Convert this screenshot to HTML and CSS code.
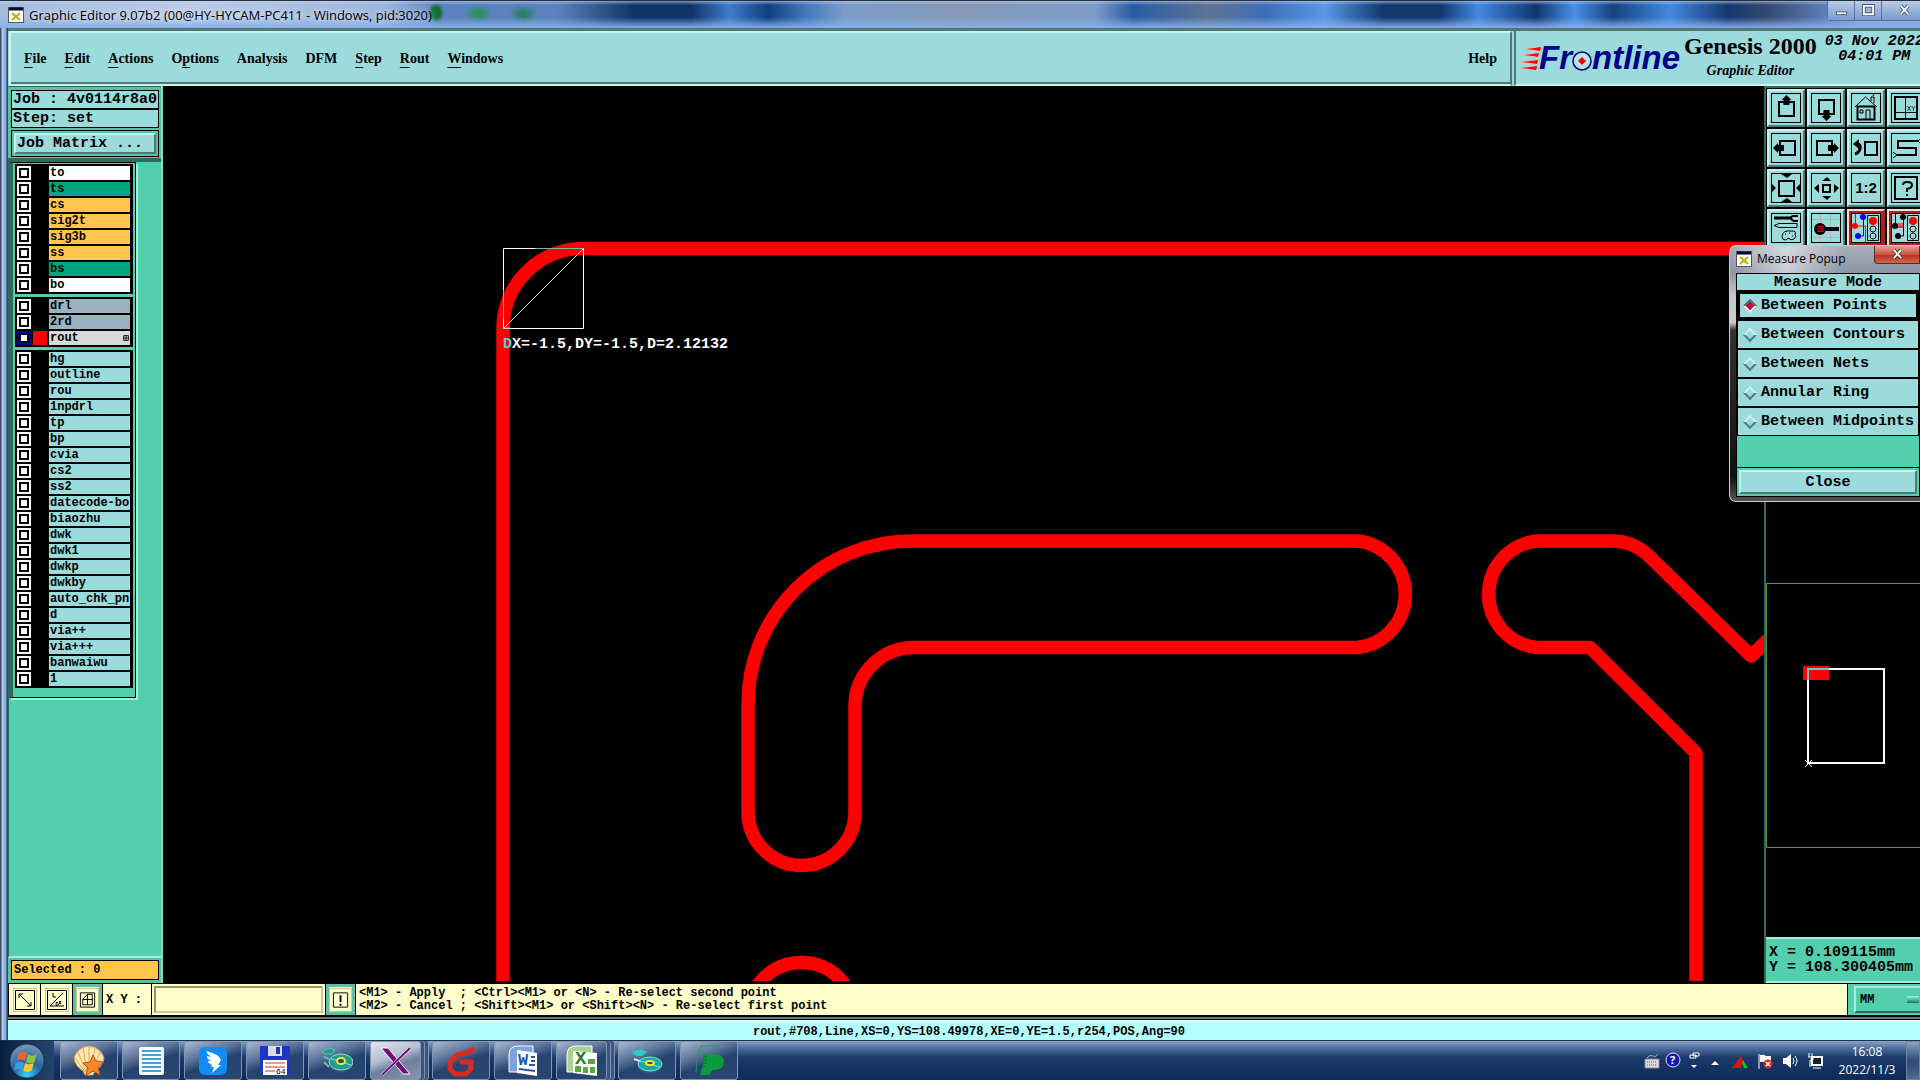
FILE: index.html
```html
<!DOCTYPE html>
<html lang="en">
<head>
    <meta charset="UTF-8">
    <meta name="viewport" content="width=device-width, initial-scale=1.0">
    <title>Graphic Editor</title>
    <link rel="stylesheet" href="styles.css">
</head>
<body>
    <main class="window">
        <header class="titlebar">
            <svg class="app-icon" viewBox="0 0 16 16"><rect x="0.5" y="0.5" width="15" height="15" fill="#fff" stroke="#555"/><path d="M1 2h14" stroke="#003" stroke-width="3"/><path d="M4 6l8 7M12 6l-8 7" stroke="#b5b300" stroke-width="2"/></svg>
            <h1>Graphic Editor 9.07b2 (00@HY-HYCAM-PC411 - Windows, pid:3020)</h1>
            <div class="controls">
                <button aria-label="Minimize"><svg viewBox="0 0 14 14"><rect x="1.5" y="8.5" width="11" height="3" fill="#fff" stroke="#4b5975"/></svg></button>
                <button aria-label="Maximize"><svg viewBox="0 0 14 14"><path d="M2 2h10v9H2z" fill="none" stroke="#4b5975" stroke-width="4"/><path d="M2 2h10v9H2z" fill="none" stroke="#fff" stroke-width="2"/></svg></button>
                <button class="wide" aria-label="Close"><svg viewBox="0 0 14 14"><path d="M3 2l8 9M11 2l-8 9" stroke="#4b5975" stroke-width="4"/><path d="M3 2l8 9M11 2l-8 9" stroke="#fff" stroke-width="2"/></svg></button>
            </div>
        </header>

        <div class="top">
            <nav class="menubar">
                <button><u>F</u>ile</button>
                <button><u>E</u>dit</button>
                <button><u>A</u>ctions</button>
                <button>O<u>p</u>tions</button>
                <button>Analysis</button>
                <button>DFM</button>
                <button><u>S</u>tep</button>
                <button><u>R</u>out</button>
                <button><u>W</u>indows</button>
                <button class="help">Help</button>
            </nav>
            <div class="brand">
                <div class="logo">
                    <svg class="speed" viewBox="0 0 24 24">
                        <path d="M4 3L18 1h6l-1 4h-5zM2 9L16 7h6l-1 4h-5zM0 16L14 14h7l-1 4h-6zM0 22L13 20h7l-1 4h-6z" fill="#f5b5ae"/>
                        <path d="M8 3l9-1 6-1-1 4-5-1zM6 9l9-1 6-1-1 4-5-1zM4 16l9-1 7-1-1 4-6-1zM3 22l9-1 7-1-1 4-6-1z" fill="#f00"/>
                    </svg>
                    <span>Fr</span>
                    <svg class="target" viewBox="0 0 20 20"><circle cx="10" cy="10" r="9" fill="#b8e4e4" stroke="#00008b" stroke-width="1.5"/><path d="M10 6l4 4-4 4-4-4z" fill="#f00"/></svg>
                    <span>ntline</span>
                </div>
                <div class="product">
                    <strong>Genesis 2000</strong>
                    <em>Graphic Editor</em>
                </div>
                <div class="date">03 Nov 2022<br>04:01 PM</div>
            </div>
        </div>

        <div class="work">
            <aside class="side">
                <div class="job">
                    <div class="info">Job : 4v0114r8a0</div>
                    <div class="info">Step: set</div>
                    <div class="matrix"><button>Job Matrix ...</button></div>
                </div>
                <div class="layers">
                    <div class="layer-list">
                        <div class="group">
                            <label class="layer white"><input type="checkbox"><i></i><span>to</span></label>
                            <label class="layer green"><input type="checkbox"><i></i><span>ts</span></label>
                            <label class="layer orange"><input type="checkbox"><i></i><span>cs</span></label>
                            <label class="layer orange"><input type="checkbox"><i></i><span>sig2t</span></label>
                            <label class="layer orange"><input type="checkbox"><i></i><span>sig3b</span></label>
                            <label class="layer orange"><input type="checkbox"><i></i><span>ss</span></label>
                            <label class="layer green"><input type="checkbox"><i></i><span>bs</span></label>
                            <label class="layer white"><input type="checkbox"><i></i><span>bo</span></label>
                        </div>
                        <div class="group">
                            <label class="layer gray"><input type="checkbox"><i></i><span>drl</span></label>
                            <label class="layer gray"><input type="checkbox"><i></i><span>2rd</span></label>
                            <label class="layer active"><input type="checkbox" checked><i></i><span>rout<svg viewBox="0 0 5 5"><path d="M0.5 0.5h4v4h-4zM2.5 0v5M0 2.5h5" fill="none" stroke="#000" stroke-width="0.7"/></svg></span></label>
                        </div>
                        <div class="group">
                            <label class="layer"><input type="checkbox"><i></i><span>hg</span></label>
                            <label class="layer"><input type="checkbox"><i></i><span>outline</span></label>
                            <label class="layer"><input type="checkbox"><i></i><span>rou</span></label>
                            <label class="layer"><input type="checkbox"><i></i><span>1npdrl</span></label>
                            <label class="layer"><input type="checkbox"><i></i><span>tp</span></label>
                            <label class="layer"><input type="checkbox"><i></i><span>bp</span></label>
                            <label class="layer"><input type="checkbox"><i></i><span>cvia</span></label>
                            <label class="layer"><input type="checkbox"><i></i><span>cs2</span></label>
                            <label class="layer"><input type="checkbox"><i></i><span>ss2</span></label>
                            <label class="layer"><input type="checkbox"><i></i><span>datecode-bo</span></label>
                            <label class="layer"><input type="checkbox"><i></i><span>biaozhu</span></label>
                            <label class="layer"><input type="checkbox"><i></i><span>dwk</span></label>
                            <label class="layer"><input type="checkbox"><i></i><span>dwk1</span></label>
                            <label class="layer"><input type="checkbox"><i></i><span>dwkp</span></label>
                            <label class="layer"><input type="checkbox"><i></i><span>dwkby</span></label>
                            <label class="layer"><input type="checkbox"><i></i><span>auto_chk_pnl</span></label>
                            <label class="layer"><input type="checkbox"><i></i><span>d</span></label>
                            <label class="layer"><input type="checkbox"><i></i><span>via++</span></label>
                            <label class="layer"><input type="checkbox"><i></i><span>via+++</span></label>
                            <label class="layer"><input type="checkbox"><i></i><span>banwaiwu</span></label>
                            <label class="layer"><input type="checkbox"><i></i><span>1</span></label>
                        </div>
                    </div>
                </div>
                <div class="selected"><div>Selected : 0</div></div>
            </aside>

            <section class="canvas">
                <svg viewBox="163 86 1601 900" preserveAspectRatio="xMinYMin slice">
                    <g fill="none" stroke="#f00" stroke-width="13.5" stroke-linejoin="round">
                        <path d="M503 981V328A80 80 0 0 1 583 248.5H1764"/>
                        <path d="M912 541H1357A53.5 53.5 0 0 1 1357 647.5H914A59 59 0 0 0 855 706V812A53.5 53.5 0 0 1 748 812V704A164 163 0 0 1 912 541Z"/>
                        <path d="M1774 634L1751 656L1650 557Q1634 541 1612 541H1537A53.5 53.5 0 0 0 1537 647.5H1590L1696 753V981"/>
                        <path d="M748 1016A53.5 53.5 0 0 1 855 1016"/>
                    </g>
                    <rect x="163" y="981" width="1601" height="10" fill="#000"/>
                    <path d="M503.5 248.5h80v80h-80z" fill="none" stroke="#fff"/>
                    <path d="M503.5 328.5l80-80" stroke="#dfe6c8"/>
                    <path d="M503.5 319V290M535 248.5h48M503.5 328h7" stroke="#7fb5ae"/>
                    <text class="measure" x="503" y="348"><tspan fill="#5cc">D</tspan>X=-1.5,DY=-1.5,D=2.12132</text>
                </svg>
            </section>

            <aside class="right">
                <div class="tools">
                    <button aria-label="Pan up"><svg viewBox="0 0 30 30"><path d="M8 9h15v14H8z" class="k2"/><path d="M15.5 2l5 5h-2v5h-6V7h-2z"/></svg></button>
                    <button aria-label="Pan down"><svg viewBox="0 0 30 30"><path d="M8 7h15v14H8z" class="k2"/><path d="M15.5 28l5-5h-2v-6h-6v6h-2z"/></svg></button>
                    <button aria-label="Home"><svg viewBox="0 0 30 30"><path d="M6.5 13.5h17v13h-17z" class="k2"/><path d="M4 14L14.5 4L26 14M9 17h3v3H9zM15 26v-9h4v9M20 8V4h3v6M22 3l1-2" class="k1"/></svg></button>
                    <button aria-label="Coordinates"><svg viewBox="0 0 30 30"><path d="M4 4h22v22H4z" class="k2"/><path d="M14.5 4v22M4 19.5h22" class="k1"/><text x="16" y="18" font-size="7">XY</text></svg></button>
                    <button aria-label="Pan left"><svg viewBox="0 0 30 30"><path d="M9 8h15v14H9z" class="k2"/><path d="M2 15l5-5v2h6v6H7v2z"/></svg></button>
                    <button aria-label="Pan right"><svg viewBox="0 0 30 30"><path d="M6 8h15v14H6z" class="k2"/><path d="M28 15l-5-5v2h-6v6h6v2z"/></svg></button>
                    <button aria-label="Previous view"><svg viewBox="0 0 30 30"><path d="M14 9h12v13H14z" class="k2"/><path d="M5 11h2q3 1 2 5q-1 4-5 5" fill="none" stroke="#000" stroke-width="3"/><path d="M2 11l6-5v10z"/></svg></button>
                    <button aria-label="Serpentine"><svg viewBox="0 0 30 30"><path d="M27 8H7v7h18v7H6" class="k2"/><path d="M2 19l4 3l-4 3M30 5l-3 3l3 3" class="k1"/></svg></button>
                    <button aria-label="Zoom in"><svg viewBox="0 0 30 30"><path d="M8 8h15v15H8z" class="k2"/><path d="M10 1h11l-5 4zM10 29h11l-5-4zM0 10v10l5-5zM30 10v10l-5-5z"/></svg></button>
                    <button aria-label="Zoom out"><svg viewBox="0 0 30 30"><path d="M12 12h7v7h-7z" class="k2"/><path d="M11 8h9l-4-4zM11 23h9l-4 4zM8 11v9l-5-5zM23 11v9l5-5z"/></svg></button>
                    <button aria-label="Scale 1:2"><span>1:2</span></button>
                    <button aria-label="Query"><svg viewBox="0 0 30 30"><path d="M4 4h22v22H4z" class="k2"/><path d="M12 12q0-3 4-3q5 0 5 3q0 3-5 4v3M16 21v2" class="k2"/></svg></button>
                    <button aria-label="Setup"><svg viewBox="0 0 30 30"><path d="M3 5h17" stroke="#000" stroke-width="3"/><path d="M27 3h-4q-3 0-3 2t3 3h4" class="k2"/><path d="M3 12.5l5-2h18v4H8z M20 18q-8-1-9 5q0 4 3 4q2 0 3-2q3 3 6 1q3-2 1-5q2-3-4-3zM14 21h1M18 20h1M21 23h1" class="k1"/></svg></button>
                    <button aria-label="Probe"><svg viewBox="0 0 30 30"><path d="M9.5 0v30M19.5 0v30M0 6.5h30M0 24.5h30" stroke="#b9b0b5"/><circle cx="9" cy="16" r="6"/><path d="M9 14h19v4H9z"/><path d="M7 13.5h5v5H7zM9 15.5h1v1H9z" fill="none" stroke="#f00"/></svg></button>
                    <button class="red" aria-label="Netlist compare"><svg viewBox="0 0 30 30"><path d="M4.5 0v13h10v17" fill="none" stroke="#f00"/><path d="M12.5 4v19H6" fill="none" stroke="#00f"/><circle cx="4" cy="13" r="3" fill="#f00"/><circle cx="12" cy="4" r="3" fill="#00f"/><circle cx="7" cy="23" r="3" fill="#00f"/><path d="M16.5 2.5h11v25h-11z" class="k1"/><circle cx="22" cy="8" r="4" fill="#f00"/><circle cx="22" cy="16" r="3" class="k1"/><circle cx="22" cy="23" r="3" class="k1"/></svg></button>
                    <button class="red" aria-label="Netlist check"><svg viewBox="0 0 30 30"><path d="M4.5 0v13M12.5 4v19H6" class="k1"/><path d="M7 15V10M9 15V10M11 15V10M7 14h5" stroke="#f00"/><circle cx="4" cy="13" r="3"/><circle cx="12" cy="4" r="3"/><circle cx="7" cy="23" r="3"/><path d="M16.5 2.5h11v25h-11z" class="k1"/><circle cx="22" cy="8" r="4" fill="#f00"/><circle cx="22" cy="16" r="3" class="k1"/><circle cx="22" cy="23" r="3" class="k1"/></svg></button>
                </div>
                <div class="navigator">
                    <svg viewBox="1766 583 154 266">
                        <path d="M1930 583.5H1766.5v264H1930" fill="none" stroke="#5b9130"/>
                        <rect x="1803" y="666" width="26" height="14" fill="#f00"/>
                        <rect x="1808" y="669" width="76" height="94" fill="none" stroke="#fff" stroke-width="2"/>
                        <path d="M1808 680v-11h21" fill="none" stroke="#6dc4c0" stroke-width="2"/>
                        <path d="M1805 760l7 7M1812 760l-7 7" stroke="#fff"/>
                    </svg>
                </div>
                <div class="coords">X = 0.109115mm<br>Y = 108.300405mm</div>
            </aside>
        </div>

        <div class="inputbar">
            <button class="snap" aria-label="Snap off"><svg viewBox="0 0 20 20"><path d="M0.5 0.5h19v19H0.5zM4 4l12 12M4 8V4h4M16 12v4h-4" class="k1"/></svg></button>
            <button class="snap" aria-label="Angle"><svg viewBox="0 0 20 20"><path d="M0.5 0.5h19v19H0.5zM17 16H3L16 3M6 3v4h3M11 13q-2-2-2 1t3 0l2-3M14 14l-2-3" class="k1"/></svg></button>
            <button class="snap on" aria-label="Grid"><svg viewBox="0 0 20 20"><path d="M2.5 2.5h15v15h-15zM5 15V9l5-5h5v11zM10 4v11M5 9.5h10" class="k1"/></svg></button>
            <label for="xy">X Y :</label>
            <div class="field"><input type="text" id="xy"></div>
            <button class="snap on" aria-label="Apply"><svg viewBox="0 0 20 20"><path d="M2.5 2.5h15v15h-15z" class="k1"/><path d="M10 5v7M10 14v2" class="k2"/></svg></button>
            <pre class="prompt">&lt;M1&gt; - Apply  ; &lt;Ctrl&gt;&lt;M1&gt; or &lt;N&gt; - Re-select second point
&lt;M2&gt; - Cancel ; &lt;Shift&gt;&lt;M1&gt; or &lt;Shift&gt;&lt;N&gt; - Re-select first point</pre>
            <div class="units"><select aria-label="Units"><option>MM</option><option>INCH</option></select></div>
        </div>
        <div class="status">rout,#708,Line,XS=0,YS=108.49978,XE=0,YE=1.5,r254,POS,Ang=90</div>

        <section class="popup">
            <header>
                <svg class="app-icon" viewBox="0 0 16 16"><rect x="0.5" y="0.5" width="15" height="15" fill="#fff" stroke="#555"/><path d="M1 2h14" stroke="#003" stroke-width="3"/><path d="M4 6l8 7M12 6l-8 7" stroke="#b5b300" stroke-width="2"/></svg>
                <h2>Measure Popup</h2>
                <button aria-label="Close"><svg viewBox="0 0 14 14"><path d="M3 2l8 9M11 2l-8 9" stroke="#5b3333" stroke-width="4"/><path d="M3 2l8 9M11 2l-8 9" stroke="#fff" stroke-width="2"/></svg></button>
            </header>
            <div class="popup-body">
                <h3>Measure Mode</h3>
                <label class="mode"><input type="radio" name="mode" checked>Between Points</label>
                <label class="mode"><input type="radio" name="mode">Between Contours</label>
                <label class="mode"><input type="radio" name="mode">Between Nets</label>
                <label class="mode"><input type="radio" name="mode">Annular Ring</label>
                <label class="mode"><input type="radio" name="mode">Between Midpoints</label>
                <div class="close"><button>Close</button></div>
            </div>
        </section>
    </main>

    <footer class="taskbar">
        <button class="start" aria-label="Start">
            <svg viewBox="0 0 40 40">
                <defs><radialGradient id="orb" cx="50%" cy="90%" r="80%"><stop offset="0" stop-color="#3fd0f5"/><stop offset="0.5" stop-color="#1f66a0"/><stop offset="1" stop-color="#6c8fb0"/></radialGradient></defs>
                <circle cx="20" cy="20" r="18" fill="url(#orb)" stroke="#16324f"/>
                <path d="M11 12q5-3 9 0l-2 8q-4-3-9 0z" fill="#f0632b"/><path d="M21 13q4 3 9 0l-2 8q-5 3-9 0z" fill="#8cc63f"/><path d="M8 22q5-3 9 0l-2 8q-4-3-9 0z" fill="#3a9be8"/><path d="M18 22q4 3 9 0l-2 8q-5 3-9 0z" fill="#fdc72f"/>
            </svg>
        </button>
        <div class="tasks">
            <button aria-label="Shell"><svg viewBox="0 0 32 32"><path d="M1 13q1-4 4-7q5-5 11-5t11 5q3 3 4 7q-1 8-9 13l-2 4h-8l-2-4Q2 21 1 13z" fill="#fbe6b4" stroke="#d69a3c"/><path d="M16 27V2M14 27L10 3M13 27L5 7M12 27L2 13M18 27L22 3M19 27L27 7" stroke="#dba953"/><path d="M20 10l3 6 8 1-6 5 2 8-7-4-7 4 2-7-5-5 7-1z" fill="#f58a2c" stroke="#b9540f"/></svg></button>
            <button aria-label="Notes"><svg viewBox="0 0 32 32"><rect x="4" y="2" width="25" height="28" rx="2" fill="#f4fbff"/><path d="M7 6h19M7 10h19M7 14h19M7 18h19M7 22h19M7 26h19" stroke="#3ba4d8" stroke-width="2"/></svg></button>
            <button aria-label="Messenger"><svg viewBox="0 0 32 32"><rect x="2" y="2" width="28" height="28" rx="6" fill="#128bf5"/><path d="M9 6q13 3 15 9l-3 5h3l-9 8 2-6h-3l1-2q-5-3-4-4l3 0q-5-3-4-5l4 1q-4-3-5-6z" fill="#fff"/></svg></button>
            <button aria-label="Backup"><svg viewBox="0 0 32 32"><path d="M1 1h30v28l-2 2H3l-2-2z" fill="#1c35c8"/><path d="M9 1h14v10H9z" fill="#ddd"/><path d="M17 2h4v7h-4z" fill="#1c35c8"/><path d="M4 15h24v15H4z" fill="#fff"/><path d="M6 18h20M6 22h20M6 26h10" stroke="#c33"/><text x="17" y="29" font-size="8">64</text></svg></button>
            <button aria-label="Genesis"><svg viewBox="0 0 32 32"><ellipse cx="20" cy="20" rx="12" ry="8" fill="#354d86"/><ellipse cx="20" cy="17" rx="12" ry="8" fill="#1f9d88" stroke="#8ce0d6"/><path d="M10 14l8 2M30 20l-7-2" stroke="#8ce0d6"/><ellipse cx="20" cy="16" rx="4" ry="3" fill="#0a5a4a" stroke="#ffe040" stroke-width="2"/><path d="M1 7q6-6 13-2l-3 4q-6 1-10-2z" fill="#1ea08c" stroke="#59c7b9"/><path d="M3 12l5 2M3 17l5 5" stroke="#59c7b9" stroke-width="2"/></svg></button>
            <button class="current stacked" aria-label="X server"><svg viewBox="0 0 32 32"><path d="M1 3h7l22 26h-7z" fill="#70107a" stroke="#fff"/><path d="M30 3L2 30" stroke="#fff" stroke-width="3"/><path d="M30 3L2 30" stroke="#70107a" stroke-width="2"/></svg></button>
            <button aria-label="G tool"><svg viewBox="0 0 32 32"><path d="M29 3Q26 7 19 8L12 10L5 17V24L10 29H21L26 24V17H15" fill="none" stroke="#d92b20" stroke-width="5"/></svg></button>
            <button aria-label="Word"><svg viewBox="0 0 32 32"><path d="M2 27V10q0-9 9-9h15v26z" fill="#7da3df" stroke="#fff"/><path d="M10 5l20 3v23l-20-3z" fill="#fff"/><path d="M24 12h4M24 16h4M22 20h6M12 24l16 2" stroke="#2b57a5" stroke-width="2"/><text x="11" y="20" font-size="17" font-weight="bold" fill="#2b57a5">W</text></svg></button>
            <button class="stacked" aria-label="Excel"><svg viewBox="0 0 32 32"><path d="M1 27V10q0-9 9-9h16v26z" fill="#a9d28f" stroke="#fff"/><path d="M7 6l24 2v23l-24-3z" fill="#fff"/><path d="M9 21h6v6H9zM17 22h5v6h-5zM24 22h5v6h-5zM22 14h7v5h-7z" fill="#58a845"/><text x="9" y="19" font-size="19" font-weight="bold" fill="#2a7a2a">X</text></svg></button>
            <button aria-label="Genesis viewer"><svg viewBox="0 0 32 32"><ellipse cx="19" cy="22" rx="12" ry="7" fill="#354d86"/><ellipse cx="19" cy="19" rx="12" ry="7" fill="#17a9a4" stroke="#7ce8e0"/><path d="M9 16l8 2M29 22l-7-2" stroke="#7ce8e0"/><ellipse cx="19" cy="18" rx="4" ry="2" fill="#0a5a4a" stroke="#ffe040" stroke-width="2"/><path d="M1 8q7-6 15-1l-5 4q-6 1-10-3z" fill="#25d0d0"/><path d="M3 14l6 2" stroke="#ddd" stroke-width="2"/></svg></button>
            <button aria-label="P tool"><svg viewBox="0 0 32 32"><path d="M3 27q0-14 5-26h18" fill="none" stroke="#1fa04b"/><path d="M11 9h12q8 1 8 8q-1 8-9 8h-3l-2 5H7l3-11z" fill="#0c9a3f"/><path d="M10 12h4M10 15h4M10 18h4M9 21h4" stroke="#0a6e30"/></svg></button>
        </div>
        <div class="tray">
            <svg viewBox="0 0 16 16"><path d="M1 6h14v9H1z" fill="#ddd" stroke="#888"/><path d="M3 9h10M3 12h10" stroke="#555" stroke-dasharray="1 1"/><path d="M3 5q3-4 6-2t5-2" fill="none" stroke="#aaa"/></svg>
            <svg viewBox="0 0 16 16"><circle cx="8" cy="7" r="7" fill="#1616b8" stroke="#dfe4f5"/><text x="5" y="11" font-size="11" font-weight="bold" fill="#fff">?</text></svg>
            <svg viewBox="0 0 16 16"><path d="M7 0h6v3H7zM4 2h6v3H4z" fill="#234" stroke="#fff"/><path d="M5 12h6l-3 3z" fill="#fff"/></svg>
            <svg viewBox="0 0 16 16"><path d="M4 12h8l-4-4z" fill="#fff"/></svg>
            <svg class="gap" viewBox="0 0 16 16"><path d="M0 15L9 3l2 4-2 8z" fill="#e01010"/><path d="M11 7l5 8h-4l-2-5z" fill="#10c030"/></svg>
            <svg class="gap" viewBox="0 0 16 16"><path d="M2 1v15" stroke="#fff"/><path d="M3 2q4-1 6 1h5v6H3z" fill="#fff"/><circle cx="11" cy="11" r="4.5" fill="#d62a20"/><path d="M9 9l4 4M13 9l-4 4" stroke="#fff" stroke-width="1.5"/></svg>
            <svg class="gap" viewBox="0 0 16 16"><path d="M1 5h3l5-4v14l-5-4H1z" fill="#fff"/><path d="M11 5q2 3 0 6M13 3q4 5 0 10" fill="none" stroke="#fff"/></svg>
            <svg class="gap" viewBox="0 0 16 16"><path d="M5 4h10v8H5z" fill="#123" stroke="#fff" stroke-width="2"/><path d="M6 15h8M2 0v4M5 0v4M1 4h5v3H3v7" stroke="#fff" fill="none"/></svg>
            <div class="clock">16:08<br>2022/11/3</div>
        </div>
        <button class="desktop" aria-label="Show desktop"></button>
    </footer>
</body>
</html>
```
FILE: styles.css
```css
* {
    box-sizing: border-box;
}
body {
    display: flex;
    flex-direction: column;
    height: 100vh;
    margin: 0;
    overflow: hidden;
    background: #000;
    color: #000;
    font-family: "Liberation Mono", "Courier New", monospace;
    font-size: 15px;
}
button {
    padding: 0;
    border: 0;
    background: none;
    color: inherit;
    font: inherit;
    cursor: pointer;
}
h1, h2, h3 {
    margin: 0;
    font-weight: normal;
}
svg {
    display: block;
}
.k1, .k2 {
    fill: none;
    stroke: #000;
}
.k2 {
    stroke-width: 2;
}
.window {
    position: relative;
    display: flex;
    flex-direction: column;
    flex: 1;
    min-height: 0;
    padding-left: 8px;
    background: linear-gradient(90deg, #3d4f68 0 1px, #b5cdf0 2px, #7fa4e0 6px, #2c4a50 7px 8px);
    overflow: hidden;
}

/* title bar */
.titlebar {
    display: flex;
    align-items: center;
    height: 28px;
    margin-left: -8px;
    padding-left: 8px;
    flex-shrink: 0;
    border-top: 1px solid #26303f;
    background:
        linear-gradient(180deg, rgba(190, 210, 240, 0.6), transparent 15%, transparent 60%, rgba(135, 175, 235, 0.95)),
        radial-gradient(ellipse 8px 11px at 436px 12px, #0d6f38 50%, transparent),
        radial-gradient(ellipse 14px 9px at 478px 13px, #2a8f62 30%, transparent),
        radial-gradient(ellipse 14px 9px at 523px 13px, #2d806f 30%, transparent),
        linear-gradient(90deg, #a5bade 0, #b9cbe6 10%, #9db5dc 20%, #5a82bc 23%, #5a82bc 29%, #0f3468 33%, #0f3468 36%, #3f7bcc 38%, #0f3f80 40%, #4478be 42%, #7c9cc8 44%, #8499b5 50%, #7f9cc8 57%, #2a5ca5 59%, #5f7394 63%, #3f6fb8 66%, #5a98e8 69%, #12386f 72%, #12386f 75%, #4488e0 77%, #0f356e 80%, #4a90e8 82%, #14427f 84%, #4488e0 87%, #14386f 90%, #35486f 92%, #5b7db8 95%, #8aa8d8 97%);
}
.app-icon {
    width: 16px;
    height: 16px;
}
.titlebar h1 {
    padding-left: 5px;
    font: 13px "Open Sans", sans-serif;
    text-shadow: 0 0 6px #fff;
}
.controls {
    display: flex;
    align-self: flex-start;
    margin-left: auto;
    border: 1px solid #5a6f95;
    border-top: 0;
    border-right: 0;
    border-radius: 0 0 0 4px;
}
.controls button {
    display: flex;
    align-items: center;
    justify-content: center;
    width: 27px;
    height: 19px;
    border-right: 1px solid #5a6f95;
    background: linear-gradient(#b9cbe8, #7b9bd0);
}
.controls .wide {
    width: 46px;
    margin-right: -8px;
}
.controls svg {
    width: 13px;
    height: 13px;
}

/* menu bar and brand */
.top {
    display: flex;
    flex-shrink: 0;
    height: 58px;
    background: #9bdbdb;
    border-top: 3px solid #4f7877;
}
.menubar {
    display: flex;
    flex: 1;
    align-items: center;
    gap: 18px;
    margin-left: 1px;
    margin-right: 2px;
    padding: 0 13px;
    border: 2px solid #c9f2f0;
    border-right-color: #4f7877;
    box-shadow: inset 0 -2px #4f7877;
    font-family: "Liberation Serif", "Times New Roman", serif;
    font-size: 14px;
    font-weight: bold;
}
.menubar u {
    text-underline-offset: 4px;
}
.menubar .help {
    margin-left: auto;
}
.brand {
    display: flex;
    width: 406px;
    padding-left: 2px;
    border-left: 2px solid #4f7877;
    border-bottom: 2px solid #c9f2f0;
    overflow: hidden;
}
.logo {
    display: flex;
    align-items: center;
    color: #00008b;
    font-family: "Liberation Sans", Arial, sans-serif;
    font-size: 33px;
    font-weight: bold;
    font-style: italic;
}
.speed {
    width: 24px;
    height: 24px;
    margin-right: -3px;
}
.target {
    width: 20px;
    height: 20px;
    margin-top: 6px;
}
.product {
    padding-left: 4px;
    font-family: "Liberation Serif", "Times New Roman", serif;
    text-align: center;
}
.product strong {
    display: block;
    font-size: 24px;
    line-height: 30px;
    white-space: nowrap;
}
.product em {
    font-size: 14px;
    font-weight: bold;
    line-height: 20px;
}
.date {
    padding: 3px 0 0 8px;
    font-style: italic;
    font-weight: bold;
    line-height: 15px;
    text-align: center;
    white-space: nowrap;
}

.work {
    display: flex;
    flex: 1;
    min-height: 0;
    background: #000;
}

/* left panel */
.side {
    display: flex;
    flex-direction: column;
    width: 155px;
    background: #54cfae;
    border-right: 2px solid #7fe0c6;
}
.job {
    padding: 3px 2px 1px 3px;
    background: #5fbfa5;
    border-top: 1px solid #2d6b5c;
}
.info {
    height: 19px;
    padding-left: 1px;
    border: 1px solid #000;
    background: #9bdbdb;
    line-height: 17px;
    font-weight: bold;
    white-space: nowrap;
}
.matrix {
    margin-top: 2px;
    padding: 2px;
    border: 1px solid #000;
}
.matrix button, .close button {
    width: 100%;
    height: 21px;
    border: 2px solid;
    border-color: #c9f2f0 #4f7877 #4f7877 #c9f2f0;
    background: #9bdbdb;
    font-weight: bold;
}
.matrix button {
    padding-left: 1px;
    text-align: left;
}
.layers {
    flex: 1;
    min-height: 0;
    border-top: 4px solid #2d6b5c;
    border-left: 1px solid #2d6b5c;
    border-bottom: 2px solid #a6eedb;
}
.layer-list {
    display: flex;
    flex-direction: column;
    gap: 3px;
    width: 127px;
    padding: 1px 2px 9px 2px;
    border: 1px solid #000;
    border-left: 4px solid #2d6b5c;
    box-shadow: 2px 2px #a6eedb;
}
.group {
    padding: 1px 2px 1px 1px;
    background: #000;
}
.layer {
    display: flex;
    gap: 2px;
    height: 16px;
    padding: 1px;
    background: #000;
}
.layer input {
    appearance: none;
    flex-shrink: 0;
    width: 14px;
    height: 14px;
    margin: 0;
    border: 2px solid #fff;
    background: #fff;
    box-shadow: inset 0 0 0 2px #000;
}
.layer i {
    flex-shrink: 0;
    width: 14px;
}
.layer span {
    display: flex;
    flex: 1;
    align-items: center;
    justify-content: space-between;
    min-width: 0;
    padding-left: 1px;
    background: #9bdbdb;
    overflow: hidden;
    font-size: 12px;
    font-weight: bold;
    line-height: 14px;
    white-space: nowrap;
}
.layer svg {
    width: 6px;
    height: 6px;
    margin-right: 1px;
}
.white span {
    background: #fff;
}
.green span {
    background: #00a67c;
}
.orange span {
    background: #ffc64d;
}
.gray span {
    background: #9ab3bf;
}
.active span {
    background: #d9d9d9;
}
.active i {
    background: #f00;
}
.active input {
    border-color: #0000a0;
}
.selected {
    padding: 2px 2px 3px 3px;
    background: #5fbfa5;
}
.selected div {
    height: 20px;
    padding-left: 2px;
    border: 1px solid #000;
    background: #ffc64d;
    font-size: 12px;
    font-weight: bold;
    line-height: 18px;
}

/* drawing area */
.canvas {
    flex: 1;
    min-width: 0;
    overflow: hidden;
}
.canvas svg {
    width: 100%;
    height: 100%;
}
.measure {
    fill: #fff;
    font-size: 15px;
    font-weight: bold;
}

/* right panel */
.right {
    display: flex;
    flex-direction: column;
    width: 156px;
    border-left: 2px solid #2d6b5c;
    overflow: hidden;
}
.tools {
    display: grid;
    grid-template-columns: repeat(4, 38px);
    gap: 2px;
    padding: 1px;
    border-top: 2px solid #2d6b5c;
}
.tools button {
    height: 38px;
    padding: 2px;
    border: 2px solid;
    border-color: #c9f2f0 #4f7877 #4f7877 #c9f2f0;
    background: #9bdbdb;
}
.tools svg, .tools span {
    width: 30px;
    height: 30px;
    outline: 1px solid #000;
    outline-offset: -1px;
}
.tools span {
    display: block;
    font-family: "Liberation Sans", Arial, sans-serif;
    font-size: 15px;
    font-weight: bold;
    line-height: 30px;
}
.tools .red {
    border-color: #f3dcdc #a82020 #a82020 #f3dcdc;
    box-shadow: inset 0 0 0 2px #b02020;
}
.navigator {
    margin-top: auto;
    margin-bottom: 88px;
}
.navigator svg {
    width: 154px;
    height: 266px;
}
.coords {
    height: 46px;
    padding: 6px 3px;
    border-top: 2px solid #a6eedb;
    border-bottom: 2px solid #a6eedb;
    background: #54cfae;
    font-weight: bold;
    line-height: 15px;
    white-space: nowrap;
}

/* input and status bars */
.inputbar {
    display: flex;
    flex-shrink: 0;
    gap: 1px;
    height: 34px;
    padding: 1px 0 2px 1px;
    background: #000;
}
.snap {
    display: flex;
    align-items: center;
    justify-content: center;
    width: 31px;
    background: #ffc;
    border: 3px solid #ffc;
}
.snap.on {
    width: 29px;
    border-color: #5fbfa5;
}
.snap svg {
    width: 24px;
    height: 24px;
    padding: 1px;
    border: 1px solid #c9c99b;
}
.inputbar label {
    width: 48px;
    padding-left: 3px;
    background: #ffc;
    font-size: 12px;
    font-weight: bold;
    line-height: 32px;
    white-space: nowrap;
}
.field {
    width: 173px;
    padding: 2px;
    background: #ffc;
}
.field input {
    width: 100%;
    height: 100%;
    border: 2px solid;
    border-color: #94946c #c9c99b #c9c99b #94946c;
    background: #ffc;
    font: bold 12px "Liberation Mono", monospace;
}
.prompt {
    flex: 1;
    min-width: 0;
    margin: 0;
    padding: 3px;
    background: #ffc;
    font: bold 12px "Liberation Mono", "Courier New", monospace;
    line-height: 13px;
    overflow: hidden;
}
.units {
    width: 72px;
    padding: 2px 0 2px 6px;
    background: #54cfae;
}
.units select {
    appearance: none;
    width: 100%;
    height: 100%;
    padding: 0 4px;
    border: 2px solid;
    border-color: #a6eedb #2d6b5c #2d6b5c #a6eedb;
    border-right: 0;
    border-radius: 0;
    background: linear-gradient(#a6eedb, #54cfae 40%, #2d6b5c) no-repeat right 1px center / 12px 7px, #54cfae;
    font: bold 12px "Liberation Mono", monospace;
}
.status {
    flex-shrink: 0;
    height: 23px;
    padding-left: 10px;
    border-top: 2px solid #5f8585;
    background: #b4ffff;
    box-shadow: inset 0 1px #000, inset 0 3px #d8ffff;
    font-size: 12px;
    font-weight: bold;
    line-height: 27px;
    text-align: center;
}

/* measure popup */
.popup {
    position: absolute;
    top: 245px;
    right: 0;
    width: 191px;
    padding: 0 0 4px 6px;
    border: 1px solid #c6ccd4;
    border-right: 0;
    border-radius: 7px 0 0 7px;
    background: linear-gradient(#a9b0bc 0, #8c94a2 10%, #c4c8cd 20%, #c9c9c9 30%, #333 33%, #111 90%, #555);
}
.popup header {
    display: flex;
    align-items: center;
    height: 27px;
    margin-left: -6px;
    padding: 0 0 2px 6px;
    background: linear-gradient(90deg, transparent, rgba(230, 232, 236, 0.7) 30%, transparent 60%);
}
.popup h2 {
    flex: 1;
    padding-left: 5px;
    font: 12px "Open Sans", sans-serif;
}
.popup header button {
    display: flex;
    align-items: center;
    align-self: flex-start;
    justify-content: center;
    width: 46px;
    height: 18px;
    border: 1px solid #5b2a26;
    border-top: 0;
    border-radius: 0 0 0 4px;
    background: linear-gradient(#e3a093, #c9523f 50%, #b5301c 52%, #d4674c);
}
.popup header svg:not(.app-icon) {
    width: 13px;
    height: 13px;
}
.popup-body {
    background: #54cfae;
    border: 1px solid #000;
    font-weight: bold;
}
.popup h3 {
    height: 17px;
    border-bottom: 1px solid #000;
    background: #9bdbdb;
    font-size: 15px;
    font-weight: bold;
    line-height: 17px;
    text-align: center;
}
.mode {
    display: flex;
    align-items: center;
    gap: 6px;
    height: 29px;
    padding-left: 7px;
    border: 1px solid #000;
    background: #9bdbdb;
    white-space: nowrap;
}
.mode:has(:checked) {
    padding-left: 5px;
    border-width: 3px;
}
.mode input {
    appearance: none;
    flex-shrink: 0;
    width: 10px;
    height: 10px;
    margin: 0;
    border: 2px solid;
    border-color: #c9f2f0 #4f7877 #4f7877 #c9f2f0;
    transform: rotate(45deg);
}
.mode input:checked {
    border-color: #4f7877 #fff #fff #4f7877;
    background: #c8004c;
}
.close {
    margin-top: 31px;
    padding: 2px;
    border-top: 1px solid #000;
}
.close button {
    height: 24px;
}

/* taskbar */
.taskbar {
    display: flex;
    flex-shrink: 0;
    height: 40px;
    border-top: 1px solid #20324c;
    background: linear-gradient(#8aa3c6, #4b6a99 20%, #1a3a6b 42%, #0d2a58);
}
.start {
    width: 54px;
    margin-right: 6px;
    background: linear-gradient(90deg, #0a1f3d, #24446e);
}
.start svg {
    width: 38px;
    height: 38px;
    margin-left: 8px;
}
.tasks {
    display: flex;
    gap: 4px;
    flex: 1;
}
.tasks button {
    display: flex;
    align-items: center;
    justify-content: center;
    width: 58px;
    border: 1px solid #8095b5;
    border-radius: 3px;
    background: linear-gradient(160deg, #a9b9d1 0, #5c7499 35%, #26436f 55%, #27466f);
}
.tasks .current {
    background: linear-gradient(160deg, #e2e8f1 0, #b3bfd2 40%, #6d7f9e 60%, #8695b0);
}
.tasks .stacked {
    width: 51px;
    margin-right: 7px;
    box-shadow: 3px 0 #3c557d, 4px 0 #8095b5, 7px 0 #3c557d, 8px 0 #8095b5;
}
.tasks svg {
    width: 32px;
    height: 32px;
}
.tray {
    display: flex;
    align-items: center;
    gap: 5px;
    color: #fff;
    font-family: "Open Sans", sans-serif;
    font-size: 12px;
}
.tray svg {
    width: 16px;
    height: 16px;
    overflow: visible;
}
.tray .gap {
    margin-left: 4px;
}
.clock {
    width: 78px;
    line-height: 18px;
    text-align: center;
}
.desktop {
    width: 14px;
    border: 1px solid #6f84a4;
    background: linear-gradient(#8ca2c0, #2c4a74 50%, #4f6b90);
}
```
